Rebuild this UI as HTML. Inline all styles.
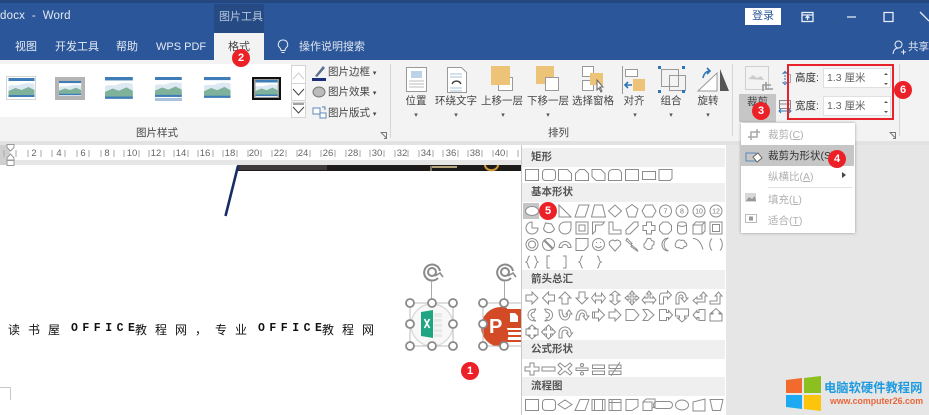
<!DOCTYPE html>
<html lang="zh"><head><meta charset="utf-8"><style>
html,body{margin:0;padding:0;background:#fff}
#r{position:relative;width:929px;height:415px;overflow:hidden;background:#fff;font-family:"Liberation Sans","Noto Sans CJK SC",sans-serif;font-size:11px;color:#444;filter:blur(.3px)}
#r div{position:absolute;white-space:nowrap}
.t{color:#e4e9f2;font-size:11px;line-height:14px;top:40px}
.l{font-size:10.5px;line-height:14px;color:#444;top:94px;text-align:center;transform:translateX(-50%)}
.c{font-size:7px;line-height:8px;color:#555;top:112px;transform:translateX(-50%)}
.b{width:18px;height:18px;border-radius:50%;background:#ec2127;color:#fff;font-size:11px;line-height:18px;text-align:center;font-weight:bold}
.h{left:522px;width:203px;height:19px;background:#efefef;font-size:10.5px;line-height:18px;text-indent:9px;color:#555;font-weight:bold}
.m{left:768px;font-size:10.5px;line-height:14px;color:#b0b0b0}
.n{top:147px;font-size:9.5px;line-height:13px;color:#666;transform:translateX(-50%)}
.d{top:322px;font-size:12px;line-height:16px;color:#111;letter-spacing:8px}
.o{top:321px;font-size:11.5px;line-height:16px;color:#111;letter-spacing:4.5px;font-weight:bold;font-family:"Liberation Mono",monospace}
svg{position:absolute;overflow:visible}
</style></head><body><div id="r">
<div style="left:0;top:0;width:929px;height:60px;background:#2b579a"></div>
<div style="left:0;top:0;width:929px;height:3px;background:#24477f"></div>
<div style="left:214px;top:4px;width:50px;height:29px;background:#264a84"></div>
<div style="left:219px;top:10px;font-size:11px;line-height:14px;color:#b9c6dc">图片工具</div>
<div style="left:0;top:9px;font-size:11.5px;line-height:15px;color:#e4e9f2;letter-spacing:.2px">docx&nbsp; -&nbsp; Word</div>
<div class="t" style="left:15px">视图</div><div class="t" style="left:55px">开发工具</div><div class="t" style="left:116px">帮助</div><div class="t" style="left:156px">WPS PDF</div>
<div style="left:214px;top:33px;width:50px;height:27px;background:#f3f3f3"></div>
<div class="t" style="left:228px;color:#444">格式</div>
<svg style="left:276px;top:39px" width="14" height="16" fill="none" stroke="#e8edf5" stroke-width="1"><path d="M7 1a4.500 4.500 0 0 0-3 8c.7.7 1 1.200 1 2.500h4c0-1.300.3-1.800 1-2.500a4.500 4.500 0 0 0-3-8zM5.500 13.500h3"/></svg>
<div class="t" style="left:299px;color:#dfe5f0">操作说明搜索</div>
<div style="left:745px;top:8px;width:36px;height:17px;background:#fff;color:#2b579a;font-size:11px;line-height:17px;text-align:center">登录</div>
<svg style="left:801px;top:11px" width="100" height="14" fill="none" stroke="#e8edf5" stroke-width="1.300"><rect x="1" y="1.500" width="11" height="9"/><path d="M1 4h11M6.500 9V5M4.500 7l2-2 2 2"/><path d="M46 6h9M83 1.500h9v9h-9z"/></svg>
<svg style="left:919px;top:11px" width="10" height="12" fill="none" stroke="#e8edf5" stroke-width="1.300"><path d="M1 1l9 9"/></svg>
<svg style="left:892px;top:40px" width="14" height="15" fill="none" stroke="#e8edf5" stroke-width="1"><circle cx="6.500" cy="4.500" r="3.500"/><path d="M1 14c.5-4 2.500-6 5.500-6M9 12h5M11.500 9.500v5"/></svg>
<div class="t" style="left:908px;font-size:10.500px;color:#e4e9f2">共享</div>

<div style="left:0;top:60px;width:929px;height:81px;background:#f3f3f3"></div>
<div style="left:0;top:64px;width:291px;height:53px;background:#fff"></div>
<div style="left:0;top:141px;width:929px;height:4px;background:#e2e2e2"></div>
<div style="left:390px;top:64px;width:1px;height:74px;background:#d6d6d6"></div>
<div style="left:732px;top:64px;width:1px;height:72px;background:#d6d6d6"></div>
<div style="left:899px;top:64px;width:1px;height:72px;background:#d6d6d6"></div>

<svg style="left:0;top:60px" width="310" height="60">
<defs><g id="p"><rect width="26" height="20" fill="#fff"/><rect width="26" height="3" y="0" fill="#3f7db8"/><rect y="3" width="26" height="15" fill="#dce8f2"/><path d="M0 8c4-2 6 0 10-1s8-3 16-1V3H0z" fill="#fff"/><path d="M0 18v-5l7-3 6 2 7-3 6 3v6z" fill="#7fb29a"/><rect y="17" width="26" height="2" fill="#3f7db8"/></g></defs>
<rect x="6.500" y="16.500" width="29" height="23" fill="#fff" stroke="#d5d5d5"/><use href="#p" x="8.500" y="18"/>
<rect x="55" y="17" width="30" height="23" fill="#b4b4b4"/><use href="#p" transform="translate(59 21) scale(.85 .75)"/>
<use href="#p" transform="translate(105 17) scale(1.070 1.150)"/>
<use href="#p" transform="translate(155 17) scale(1.030 1.050)"/><rect x="155" y="38" width="27" height="3" fill="#a9c3de"/>
<use href="#p" transform="translate(204 17) scale(1.020 1.100)"/>
<rect x="252" y="17" width="29" height="23" fill="#111"/><rect x="254" y="19" width="25" height="19" fill="#999"/><use href="#p" transform="translate(255.500 20) scale(.85 .85)"/>
<g fill="#fff" stroke="#d4d4d4"><rect x="291.500" y="5.500" width="14" height="18"/><rect x="291.500" y="23.500" width="14" height="17"/><rect x="291.500" y="42.500" width="14" height="15"/></g>
<g fill="none" stroke="#444"><path d="M293 19l5.500-6 5.500 6" stroke="#ccc"/><path d="M293 29l5.500 6 5.500-6M293 47l5.500 6 5.500-6M293 44h11"/></g>
</svg>
<svg style="left:311px;top:64px" width="22" height="56" fill="none"><path d="M4 12l8-10 2 2-8 9z" fill="#5b6f8e"/><rect x="1" y="14" width="14" height="3" fill="#1c2f7a"/><ellipse cx="8" cy="28" rx="6" ry="5" fill="#bbb" stroke="#777"/><rect x="2" y="44" width="7" height="6" fill="#fff" stroke="#5b8ab8"/><rect x="9" y="49" width="6" height="5" fill="#fff" stroke="#5b8ab8"/><path d="M11 43h3v3" stroke="#4e7fb0"/></svg>
<div style="left:328px;top:65px;font-size:10.500px;line-height:14px">图片边框 <span style="font-size:7px">▾</span></div>
<div style="left:328px;top:85px;font-size:10.500px;line-height:14px">图片效果 <span style="font-size:7px">▾</span></div>
<div style="left:328px;top:106px;font-size:10.500px;line-height:14px">图片版式 <span style="font-size:7px">▾</span></div>
<div style="left:136px;top:126px;font-size:10.500px;line-height:14px;color:#444">图片样式</div>
<div style="left:548px;top:126px;font-size:10.500px;line-height:14px;color:#444">排列</div>
<svg style="left:380px;top:131px" width="9" height="9" fill="none" stroke="#777"><path d="M.5 1.500h6v6M1 1.500l5 5M4 7.500h3"/></svg>
<svg style="left:889px;top:131px" width="9" height="9" fill="none" stroke="#777"><path d="M.5 1.500h6v6M1 1.500l5 5M4 7.500h3"/></svg>

<svg style="left:400px;top:62px" width="340" height="34" fill="none" stroke="#999">
<rect x="6.500" y="5.500" width="20" height="24" fill="#fff"/><rect x="11" y="9" width="11" height="7" fill="#bcd2e6" stroke="none"/><path d="M9 19h15M9 22h15M9 25h15" stroke="#bbb"/>
<path d="M47.500 5.500h14l5 5v20h-19z" fill="#fff"/><path d="M50 12h12M50 15h12M50 26h12M50 29h12" stroke="#a9c0d6"/><path d="M52 22a5 5 0 0 1 9 0" stroke="#444" stroke-width="1.500"/>
<rect x="98.500" y="15.500" width="14" height="13" fill="#fff"/><rect x="91" y="4" width="19" height="19" fill="#edc477" stroke="none"/>
<rect x="136" y="4" width="18" height="18" fill="#edc477" stroke="none"/><rect x="145.500" y="15.500" width="13" height="13" fill="#fff"/>
<rect x="182.500" y="4.500" width="11" height="10" fill="#fff"/><rect x="182.500" y="18.500" width="11" height="10" fill="#fff"/><rect x="190" y="11" width="13" height="12" fill="#edc477" stroke="none"/><path d="M197 18l0 10 2-2 2 4 1-1-2-4 3 0z" fill="#fff" stroke="#666"/>
<path d="M222.500 4v28"/><rect x="225.500" y="7.500" width="12" height="7" fill="#fff"/><rect x="233" y="17" width="12" height="12" fill="#edc477" stroke="none"/><path d="M232 23h-7M228 20l-3 3 3 3" stroke="#2f74b5" stroke-width="1.600"/>
<rect x="261.500" y="7.500" width="17" height="17" fill="none"/><rect x="269.500" y="13.500" width="16" height="15" fill="none"/><g fill="#2f74b5" stroke="none"><rect x="258" y="4" width="3" height="3"/><rect x="282" y="4" width="3" height="3"/><rect x="258" y="28" width="3" height="3"/><rect x="282" y="28" width="3" height="3"/></g>
<path d="M298 29l19-18v18z" fill="#fff"/><path d="M320 7v22h9z" fill="#555" stroke="none"/><path d="M303 16c1-5 4-7 7-7M307 6l3 3-3 3" stroke="#2f74b5" stroke-width="1.600"/>
</svg>
<div class="l" style="left:416px">位置</div><div class="l" style="left:456px">环绕文字</div><div class="l" style="left:502px">上移一层</div><div class="l" style="left:548px">下移一层</div><div class="l" style="left:593px">选择窗格</div><div class="l" style="left:634px">对齐</div><div class="l" style="left:671px">组合</div><div class="l" style="left:708px">旋转</div>
<div class="c" style="left:416px">▾</div><div class="c" style="left:456px">▾</div><div class="c" style="left:503px">▾</div><div class="c" style="left:548px">▾</div><div class="c" style="left:635px">▾</div><div class="c" style="left:671px">▾</div><div class="c" style="left:708px">▾</div>

<svg style="left:745px;top:66px" width="30" height="28" fill="none" stroke="#cfcfcf"><rect x=".5" y=".5" width="23" height="23"/><path d="M3 13l5-4 4 3 4-2 3 4z" fill="#ccc" stroke="none"/><path d="M18 25V19h8M21 16v7h7" stroke="#999" stroke-width="1.600"/></svg>
<div style="left:739px;top:94px;width:37px;height:28px;background:#c6c6c6"></div>
<div style="left:747px;top:95px;font-size:10.500px;line-height:14px;color:#444">裁剪</div>
<svg style="left:778px;top:71px" width="14" height="44" fill="none"><path d="M7 1v12" stroke="#2f74b5" stroke-dasharray="2 1"/><path d="M4.500 3L7 .5 9.500 3M4.500 11L7 13.500 9.500 11" stroke="#2f74b5"/><rect x="9.500" y="3.500" width="3" height="8" stroke="#888" opacity=".7"/><path d="M1.500 29.500h11v8h-11zM1.500 33h11" stroke="#888"/><path d="M1 40h12M3 38l-2 2 2 2M11 38l2 2-2 2" stroke="#2f74b5"/></svg>
<div style="left:795px;top:71px;font-size:10.500px;line-height:14px;color:#333">高度:</div>
<div style="left:795px;top:99px;font-size:10.500px;line-height:14px;color:#333">宽度:</div>
<div style="left:823px;top:68px;width:68px;height:20px;background:#fff;border:1px solid #e0e0e0;box-sizing:border-box;font-size:10.500px;line-height:18px;text-indent:3px;color:#666">1.3 厘米</div>
<div style="left:823px;top:96px;width:68px;height:20px;background:#fff;border:1px solid #e0e0e0;box-sizing:border-box;font-size:10.500px;line-height:18px;text-indent:3px;color:#666">1.3 厘米</div>
<svg style="left:882px;top:71px" width="8" height="44" fill="#555"><path d="M2 4l2-2 2 2zM2 12l2 2 2-2zM2 32l2-2 2 2zM2 40l2 2 2-2z"/></svg>
<div style="left:787px;top:64px;width:107px;height:56px;border:2px solid #e8212c;box-sizing:border-box"></div>

<div style="left:0;top:145px;width:521px;height:15px;background:#fff"></div>
<div style="left:0;top:160px;width:521px;height:5px;background:#e6e6e6"></div>
<div style="left:0;top:145px;width:10px;height:20px;background:#cfcfcf"></div>
<svg style="left:4px;top:144px" width="14" height="22"><path d="M3 .5h7v3L6.500 7 3 3.500z" fill="#fff" stroke="#999"/><path d="M6.500 10L10 14v2H3v-2z" fill="#fff" stroke="#999"/><rect x="3" y="16.500" width="7" height="5" fill="#fff" stroke="#999"/></svg>
<div class="n" style="left:34px">2</div><div class="n" style="left:59px">4</div><div class="n" style="left:83px">6</div><div class="n" style="left:107px">8</div><div class="n" style="left:132px">10</div><div class="n" style="left:156px">12</div><div class="n" style="left:181px">14</div><div class="n" style="left:205px">16</div><div class="n" style="left:230px">18</div><div class="n" style="left:254px">20</div><div class="n" style="left:279px">22</div><div class="n" style="left:303px">24</div><div class="n" style="left:328px">26</div><div class="n" style="left:353px">28</div><div class="n" style="left:377px">30</div><div class="n" style="left:402px">32</div><div class="n" style="left:426px">34</div><div class="n" style="left:451px">36</div><div class="n" style="left:475px">38</div><div class="n" style="left:500px">40</div>
<svg style="left:0;top:148px" width="521" height="10" stroke="#aaa" stroke-width="1"><path d="M4 2v7M16 2v7M28 2v7M41 2v7M52 2v7M65 2v7M77 2v7M89 2v7M101 2v7M114 2v7M124 2v7M139 2v7M149 2v7M164 2v7M174 2v7M188 2v7M198 2v7M213 2v7M223 2v7M237 2v7M248 2v7M261 2v7M272 2v7M286 2v7M297 2v7M310 2v7M321 2v7M335 2v7M346 2v7M360 2v7M370 2v7M384 2v7M395 2v7M408 2v7M419 2v7M433 2v7M443 2v7M458 2v7M468 2v7M482 2v7M493 2v7M507 2v7M518 2v7"/></svg>

<div style="left:237px;top:165px;width:284px;height:6px;background:#1d1a1a"></div>
<div style="left:237px;top:165px;width:90px;height:5px;background:#3e393b"></div>
<svg style="left:430px;top:165px" width="91" height="6" fill="none"><path d="M1 1v5" stroke="#d8d0b0"/><path d="M2 2h25" stroke="#b5a57c" stroke-width="2"/><path d="M55 0a5 4 0 0 0 13 0" stroke="#d0983a" stroke-width="2"/></svg>
<svg style="left:220px;top:164px" width="22" height="56" fill="none"><path d="M18 2L5.500 52" stroke="#152c66" stroke-width="2.600"/></svg>

<div class="d" style="left:8px">读书屋</div>
<div class="o" style="left:71px">OFFICE</div>
<div class="d" style="left:135px">教程网，</div>
<div class="d" style="left:215px">专业</div>
<div class="o" style="left:258px">OFFICE</div>
<div class="d" style="left:322px">教程网</div>
<svg style="left:0;top:387px" width="12" height="28" fill="none"><path d="M0 .5h10.500V13" stroke="#c9c9c9"/></svg>

<svg style="left:400px;top:262px" width="125" height="100" fill="none">
<g stroke="#8a8a8a" stroke-width="2" fill="none"><path d="M38 16a8 8 0 1 1 2-7"/><circle cx="32" cy="10" r="4"/><path d="M35 14l5-3 3 4" stroke-width="1.600"/></g>
<g stroke="#8a8a8a" stroke-width="2" fill="none"><path d="M111 16a8 8 0 1 1 2-7"/><circle cx="105" cy="10" r="4"/><path d="M108 14l5-3 3 4" stroke-width="1.600"/></g>
<path d="M31.500 19v22M104.500 19v22" stroke="#aaa"/>
<circle cx="32" cy="63" r="21" fill="#f8f8f8" stroke="#dcdcdc" stroke-width="1.500"/>
<path d="M21 50l12-2v28l-12-2z" fill="#1fa582"/><path d="M24.500 57l5 9m0-9l-5 9" stroke="#fff" stroke-width="1.700"/>
<path d="M34 51h8v24h-8z" fill="#e9e9e9"/><path d="M34 56h8M34 61h8M34 66h8M34 71h8" stroke="#fff"/>
<rect x="10" y="41" width="43" height="43" stroke="#bbb" stroke-width="1"/>
<circle cx="101" cy="65" r="20" fill="#d24a26"/>
<rect x="107" y="46" width="14" height="38" fill="#fff"/>
<path d="M107 47h14v19h-14z" fill="#d24a26"/>
<path d="M110 51h5l3 3v6h-8z" fill="#fff"/>
<path d="M107 66a20 20 0 0 1 0 14" fill="#d24a26"/>
<path d="M107 69h14M107 74h14M107 79h14" stroke="#d24a26" stroke-width="2"/>
<text x="89" y="71" font-family="Liberation Sans" font-weight="bold" font-size="20" fill="#fff" stroke="none">P</text>
<rect x="83" y="41" width="40" height="43" stroke="#bbb"/>
<g fill="#fff" stroke="#8a8a8a" stroke-width="1.800"><circle cx="10" cy="41" r="4"/><circle cx="32" cy="41" r="4"/><circle cx="53" cy="41" r="4"/><circle cx="10" cy="62" r="4"/><circle cx="53" cy="62" r="4"/><circle cx="10" cy="84" r="4"/><circle cx="32" cy="84" r="4"/><circle cx="53" cy="84" r="4"/><circle cx="83" cy="41" r="4"/><circle cx="104" cy="41" r="4"/><circle cx="83" cy="62" r="4"/><circle cx="83" cy="84" r="4"/><circle cx="104" cy="84" r="4"/></g>
</svg>

<div style="left:521px;top:145px;width:408px;height:270px;background:#e6e6e6"></div>
<div style="left:521px;top:145px;width:205px;height:270px;background:#fff;border-left:1px solid #c8c8c8;box-sizing:border-box"></div>
<div class="h" style="top:148px">矩形</div>
<div class="h" style="top:183px">基本形状</div>
<div class="h" style="top:270px">箭头总汇</div>
<div class="h" style="top:340px">公式形状</div>
<div class="h" style="top:377px">流程图</div>
<div style="left:523px;top:203px;width:16px;height:16px;background:#c6c6c6"></div>

<svg style="left:522px;top:0" width="204" height="415" fill="none" stroke="#8c8c8c" stroke-width="1">
<defs>
<path id="sR" d="M-6-3h6v-3l6 6-6 6v-3h-6z"/>
<path id="sF" d="M-6.500-5.500h13v11h-13z"/>
</defs>
<g transform="translate(0 175)">
<use href="#sF" x="10"/>
<rect x="20.500" y="-5.500" width="13" height="11" rx="3"/>
<path transform="translate(43)" d="M-6.500-5.500h9l4 4v7h-13z"/>
<path transform="translate(60)" d="M-6.500 5.500v-7l4-4h5l4 4v7z"/>
<path transform="translate(76.500)" d="M-6.500-5.500h9l4 4v7h-9l-4-4z"/>
<path transform="translate(93)" d="M-6.500 5.500v-7a4 4 0 0 1 4-4h5a4 4 0 0 1 4 4v7z"/>
<path transform="translate(110)" d="M-6.500-5.500h13v11h-13z"/>
<path transform="translate(127)" d="M-6.500-3.500h13v8h-13z"/>
<path transform="translate(143.500)" d="M-6.500-5.500h13v9l-2 2h-11z"/>
</g>
<g transform="translate(0 211)">
<ellipse cx="10" cy="0" rx="6.500" ry="4.500" fill="#fff"/>
<path transform="translate(43)" d="M-6-6v12h12z"/>
<path transform="translate(60)" d="M-7 6l4-12h10l-4 12z"/>
<path transform="translate(76.500)" d="M-7 6l3-12h8l3 12z"/>
<path transform="translate(93)" d="M-6.500 0l6.500-6 6.500 6-6.500 6z"/>
<path transform="translate(110)" d="M-6-2l6-4.500 6 4.500-2.500 8h-7z"/>
<path transform="translate(127)" d="M-7 0l3.500-6h7l3.500 6-3.500 6h-7z"/>
<g font-family="Liberation Sans" font-size="7" text-anchor="middle" stroke="none" fill="#777"><text x="143.500" y="2.500">7</text><text x="160" y="2.500">8</text><text x="177" y="2.500">10</text><text x="194" y="2.500">12</text></g>
<circle cx="143.500" r="6"/><circle cx="160" r="6"/><circle cx="177" r="6"/><circle cx="194" r="6"/>
</g>
<g transform="translate(0 228)">
<path transform="translate(10)" d="M0-6a6 6 0 1 0 6 6h-6z"/>
<path transform="translate(26.500)" d="M-5 1l2-6 6 1 3 5a6 6 0 0 1-11 0z"/>
<path transform="translate(43)" d="M6-6v6a6 6 0 0 1-12 0 6 6 0 0 1 6-6z"/>
<rect x="54" y="-6" width="12" height="12"/><rect x="57" y="-3" width="6" height="6"/>
<path transform="translate(76.500)" d="M-6 6v-12h12l-2.500 3h-6.500v6z"/>
<path transform="translate(93)" d="M-6-6h4v8h8v4h-12z"/>
<path transform="translate(110)" d="M-6 6v-4l8-8h4v4l-8 8z"/>
<path transform="translate(127)" d="M-2.500-6h5v3.500h3.500v5h-3.500v3.500h-5v-3.500h-3.500v-5h3.500z"/>
<path transform="translate(143.500)" d="M-2.500-6h5l3.500 3.500v5l-3.500 3.500h-5l-3.500-3.500v-5z"/>
<rect x="155.500" y="-6" width="9" height="12" rx="3"/><path d="M155.500-3c3 2 6 2 9 0"/>
<path transform="translate(177)" d="M-6-3h9v9h-9zM-6-3l3-3h9v9l-3 3M3-3l3-3"/>
<rect x="188" y="-6" width="12" height="12"/><rect x="190.500" y="-3.500" width="7" height="7"/>
</g>
<g transform="translate(0 244.500)">
<circle cx="10" r="6"/><circle cx="10" r="3.500"/><circle cx="26.500" r="6"/><path d="M22.500-4l8 8" stroke-width="2"/>
<path transform="translate(43)" d="M-6 3a6 6 0 0 1 12 0h-3a3 3 0 0 0-6 0z"/>
<path transform="translate(60)" d="M-6-6h12v8l-4 4h-8z"/>
<circle cx="76.500" r="6"/><path d="M73.500 1.500a3.500 3.500 0 0 0 6 0M74 -2h1M78-2h1"/>
<path transform="translate(93)" d="M0 6.500l-5.500-6a3.500 3.500 0 0 1 5.500-4 3.500 3.500 0 0 1 5.500 4z"/>
<path transform="translate(110)" d="M-5-6l5 5-1 1 6 5 1 2-7-5 1-1-6-5z"/>
<path transform="translate(127)" d="M-1.500-6h3l1 2 2.500 1v3l-2 1.500v2.500l-2.500 1-2 0-1.500-1-2-1.500v-3l1.500-1.500z"/>
<path transform="translate(143.500)" d="M3-6.500a7 7 0 0 0 0 13 6 6 0 0 1 0-13z"/>
<path transform="translate(160)" d="M-6-2c1-3 4-3 5-2 2-1 4 0 4 2 3 1 2 5-1 4 0 2-3 3-5 1-3 1-5-2-3-5z"/>
<path transform="translate(177)" d="M-6-6c5 0 8 4 10 11"/>
<path transform="translate(194)" d="M-4-6c-3 3-3 9 0 12M4-6c3 3 3 9 0 12"/>
</g>
<g transform="translate(0 262)">
<path d="M8-6c-3 0-1 5-4 6 3 1 1 6 4 6M12-6c3 0 1 5 4 6-3 1-1 6-4 6M28-6h-3v12h3M41-6h3V6h-3M61-6c-3 0-1 5-4 6 3 1 1 6 4 6M75-6c3 0 1 5 4 6-3 1-1 6-4 6"/>
</g>
<g transform="translate(0 298)">
<use href="#sR" x="10"/>
<path transform="translate(26.500)" d="M6-3h-6v-3l-6 6 6 6v-3h6z"/>
<path transform="translate(43)" d="M-3 6v-6h-3l6-6 6 6h-3v6z"/>
<path transform="translate(60)" d="M-3-6v6h-3l6 6 6-6h-3v-6z"/>
<path transform="translate(76.500)" d="M-3-2h6v-3l4 5-4 5v-3h-6v3l-4-5 4-5z"/>
<path transform="translate(93)" d="M-2-3v6h-3l5 4 5-4h-3v-6h3l-5-4-5 4z"/>
<path transform="translate(110)" d="M0-7l2.500 3h-1.500v3h3v-1.500l3 2.500-3 2.500v-1.500h-3v3h1.500l-2.500 3-2.500-3h1.500v-3h-3v1.500l-3-2.500 3-2.500v1.500h3v-3h-1.500z"/>
<path transform="translate(127)" d="M0-7l2.500 3h-1.500v4h3v-1.500l3 3.500-3 3.500v-1.500h-8v1.500l-3-3.500 3-3.500v1.500h3v-4h-1.500z"/>
<path transform="translate(143.500)" d="M-6 6v-8a3 3 0 0 1 3-3h5v-2l4 4-4 4v-2h-4v7z"/>
<path transform="translate(160)" d="M-6 6v-7a5 5 0 0 1 10 0v1h2l-3.500 4-3.500-4h2v-1a2 2 0 0 0-4 0v7z"/>
<path transform="translate(177)" d="M6-2v6h-8v2l-4-3.500 4-3.500v2h5v-3h-2l3.500-4 3.500 4z"/>
<path transform="translate(194)" d="M-6 6v-3h7v-5h-2l3.500-4 3.500 4h-2v8z"/>
</g>
<g transform="translate(0 315)">
<path transform="translate(10)" d="M4-6c-6 0-8 3-8 6s2 6 8 6M4-6l-2 3M4 6L1 4M3-3c-3 0-4 2-4 3s1 3 4 3"/>
<path transform="translate(26.500)" d="M-4-6c6 0 8 3 8 6s-2 6-8 6M-4-6l2 3M-4 6l3-2M-3-3c3 0 4 2 4 3s-1 3-4 3"/>
<path transform="translate(43)" d="M-6-5c0 7 3 10 6 10s5-3 5-6h2l-3-4-3 4h1.500c0 2-1 3-2.500 3s-3-3-3-7z"/>
<path transform="translate(60)" d="M-6 5c0-7 3-10 6-10s5 3 5 6h2l-3 4-3-4h1.500c0-2-1-3-2.500-3s-3 3-3 7z"/>
<path transform="translate(76.500)" d="M-6-3h6v-3l6 6-6 6v-3h-6zM-4-3v6"/>
<use href="#sR" x="93"/>
<path transform="translate(110)" d="M-6-5.500h8l5 5.500-5 5.500h-8z"/>
<path transform="translate(127)" d="M-6-5.500h5l6 5.500-6 5.500h-5l4-5.500z"/>
<path transform="translate(143.500)" d="M-6-5.500h7v3h2v-2l4 4.500-4 4.500v-2h-2v3h-7z"/>
<path transform="translate(160)" d="M-6.500-6h13v7h-4v2h2l-4.500 4-4.500-4h2v-2h-4z"/>
<path transform="translate(177)" d="M6-5.500h-6v3h-2v-2l-4 4.500 4 4.500v-2h2v3h6z"/>
<path transform="translate(194)" d="M-6 6v-7h3v-1h-2l5-4.500 5 4.500h-2v1h3v7z"/>
</g>
<g transform="translate(0 332)">
<path transform="translate(10)" d="M0-7l3.500 3h-1.500v1h4v6h-4v1h1.500l-3.500 3-3.500-3h1.500v-1h-4v-6h4v-1h-1.500z"/>
<path transform="translate(26.500)" d="M0-7l3 3h-1v2h2v-1l3 3-3 3v-1h-2v2h1l-3 3-3-3h1v-2h-2v1l-3-3 3-3v1h2v-2h-1z"/>
<path transform="translate(43)" d="M-6 6v-5a6 6 0 0 1 12 0h1.500l-3 4-3-4h1.500a3 3 0 0 0-6 0v5z"/>
</g>
<g transform="translate(0 369)">
<path transform="translate(10)" d="M-2-6h4v4h5v4h-5v4h-4v-4h-5v-4h5z"/>
<rect x="20" y="-2" width="13" height="4"/>
<path transform="translate(43)" d="M-5-6l5 4 5-4 2 2-4 4 4 4-2 2-5-4-5 4-2-2 4-4-4-4z"/>
<rect x="54" y="-1" width="12" height="2.500"/><circle cx="60" cy="-4" r="1.500"/><circle cx="60" cy="4.500" r="1.500"/>
<path d="M70.500-4h12v3.500h-12zM70.500 2h12v3.500h-12zM87-4h12v3.500H87zM87 2h12v3.500H87zM89 7l9-14"/>
</g>
<g transform="translate(0 405)">
<use href="#sF" x="10"/><rect x="20.500" y="-5.500" width="13" height="11" rx="3"/>
<path d="M36-.5l7-4.500 7 4.500-7 4.500zM53 5.500L58-5.500h9l-4 11zM70-5.500h13v11H70zM72.500-5.500v11M80.500-5.500v11M87-5.500h12v11H87zM87-2.500h12M90-5.500v11M104-5.500h12v7l-6 4h-6zM121-3h9v8.500h-9zM121-3l3-3h9v8l-3 1M135-3.500h12a3.500 3.500 0 0 1 0 7h-12a3.500 3.500 0 0 1 0-7z"/>
<ellipse cx="160" rx="6.500" ry="5"/><path d="M171-3l12-3v12h-12zM188-5.500h13l-2.500 11h-8z"/>
</g>
</svg>

<div style="left:741px;top:123px;width:114px;height:110px;background:#fff;box-shadow:0 0 3px rgba(0,0,0,.35)"></div>
<div style="left:741px;top:145px;width:113px;height:21px;background:#c6c6c6"></div>
<svg style="left:745px;top:126px" width="20" height="100" fill="none"><path d="M3 11h9V3M6 14V6h9" stroke="#a8a8a8" stroke-width="1.500"/><rect x="1" y="27" width="10" height="8" stroke="#5b8ab8"/><path d="M8 31l5-4 4 5-5 4z" fill="#fff" stroke="#666"/><rect x="0" y="67" width="11" height="9" fill="#d8d8d8"/><path d="M1 75l3-4 3 2 3-3 1 5z" fill="#999"/><rect x=".5" y="88.500" width="11" height="8" stroke="#bbb"/><rect x="4" y="90.500" width="4" height="4" fill="#999"/></svg>
<div class="m" style="top:128px">裁剪(<u>C</u>)</div>
<div class="m" style="top:149px;color:#333">裁剪为形状(S)</div>
<div class="m" style="top:170px">纵横比(<u>A</u>)</div>
<div style="left:842px;top:172px;width:0;height:0;border-left:4px solid #444;border-top:3.500px solid transparent;border-bottom:3.500px solid transparent"></div>
<div style="left:768px;top:187px;width:84px;height:1px;background:#e2e2e2"></div>
<div class="m" style="top:193px">填充(<u>L</u>)</div>
<div class="m" style="top:214px">适合(<u>T</u>)</div>

<div class="b" style="left:232px;top:49px">2</div>
<div class="b" style="left:752px;top:102px">3</div>
<div class="b" style="left:828px;top:150px">4</div>
<div class="b" style="left:539px;top:202px">5</div>
<div class="b" style="left:894px;top:81px">6</div>
<div class="b" style="left:461px;top:362px">1</div>

<svg style="left:786px;top:376px" width="36" height="36"><path d="M0 4l16-2v15H0z" fill="#f26b2c"/><path d="M18 2l17-2v17H18z" fill="#8cc01e"/><path d="M0 19h16v14l-16-2z" fill="#1eaaf0"/><path d="M18 19h17v16l-17-2z" fill="#fcc40a"/></svg>
<div style="left:824px;top:380px;font-size:12.300px;line-height:16px;color:#1e9be0;font-weight:bold">电脑软硬件教程网</div>
<div style="left:830px;top:396px;font-size:8.800px;line-height:11px;color:#e8663a;font-weight:bold">www.computer26.com</div>
</div></body></html>
